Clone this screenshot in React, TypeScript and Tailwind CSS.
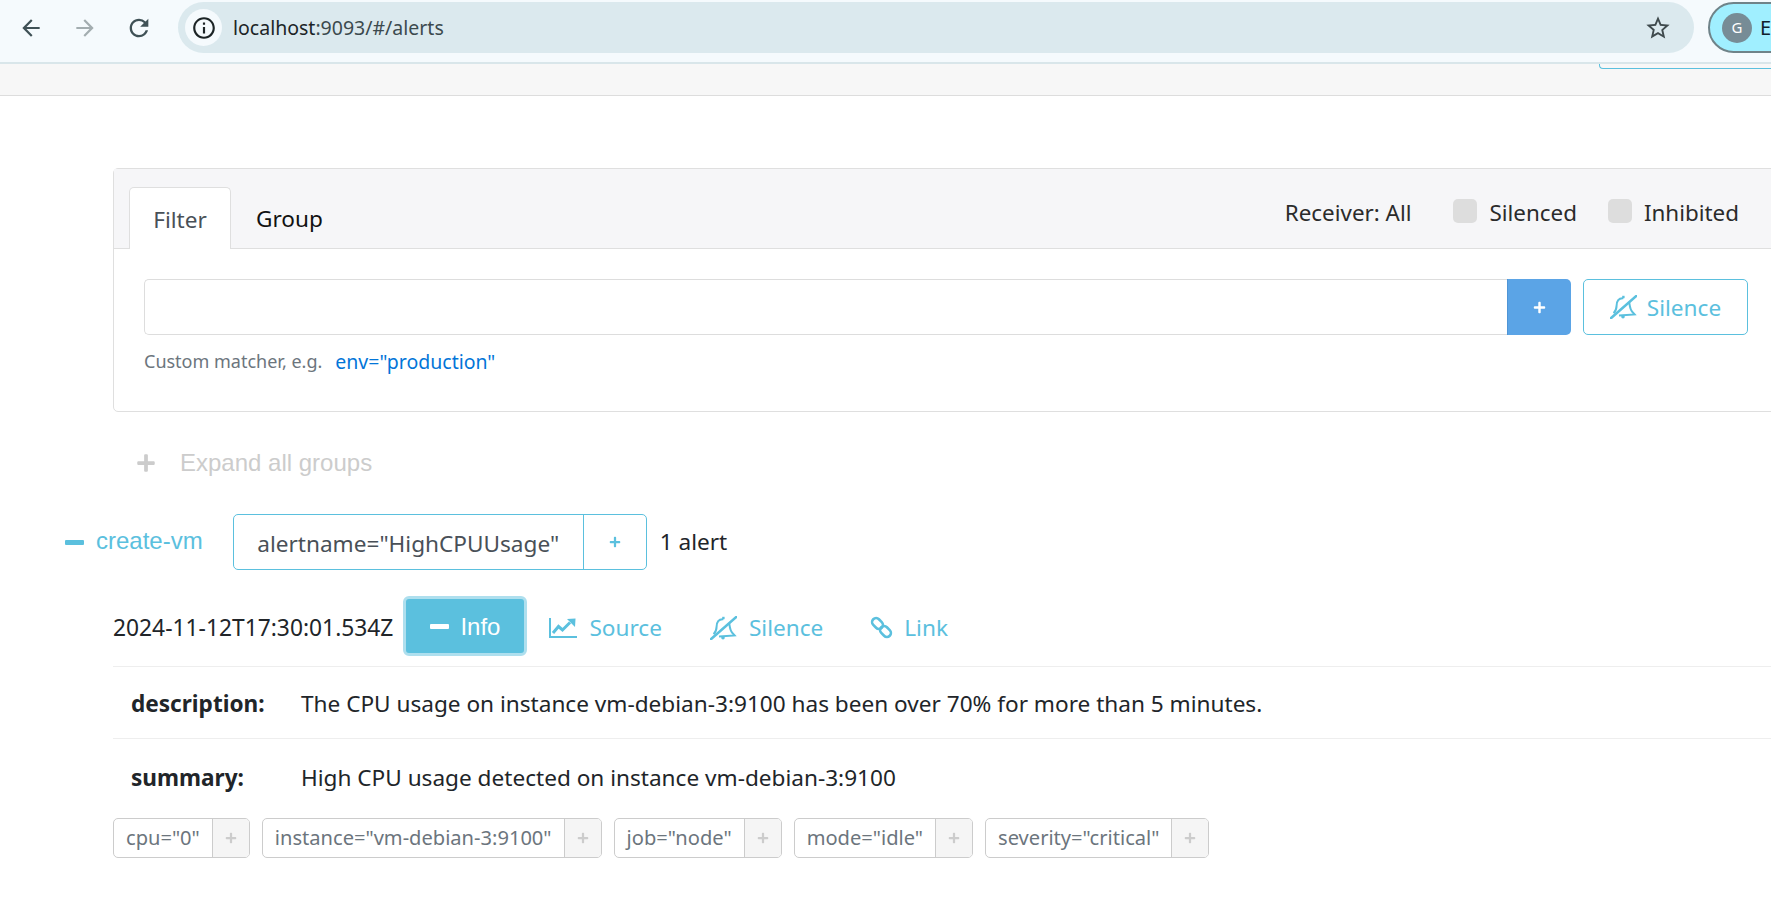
import { FaPlus } from "react-icons/fa";
import { MdArrowBack, MdArrowForward, MdInfoOutline, MdRefresh, MdStarBorder } from "react-icons/md";

const labels = ['cpu="0"', 'instance="vm-debian-3:9100"', 'job="node"', 'mode="idle"', 'severity="critical"'];

// font awesome 4 look, the packaged icons are heavier
const BellSlash = () => (
  <svg viewBox="0 0 27 24" fill="none" stroke="currentColor" strokeWidth="2" className="h-[24px] w-[27px] shrink-0">
    <path d="M0.7 23.4 L26.3 1" strokeWidth="2.6" strokeLinecap="round" />
    <path d="M13.4 3.2 C8.6 2.6 6.6 6.6 6.6 10.5 C6.6 13.6 5.4 16.4 3.6 18.2" />
    <path d="M19.3 7.6 C19.8 11 20 14.6 22.6 17.2 L24.6 19.4 L9 20.6" />
    <path d="M13.4 0.8 L13.4 3.2" strokeWidth="2.4" />
    <circle cx="13" cy="21.8" r="1.8" fill="currentColor" stroke="none" />
  </svg>
);

const LineChart = () => (
  <svg viewBox="0 0 28 20" fill="none" stroke="currentColor" className="h-[20px] w-[28px] shrink-0">
    <path d="M1 0 L1 19 L28 19" strokeWidth="2" />
    <path d="M4 15 L9.5 8.5 L13.5 12 L21 4.5" strokeWidth="3" />
    <path d="M18 1 L26.5 0.5 L26 9 Z" fill="currentColor" stroke="none" />
  </svg>
);

const Chain = () => (
  <svg viewBox="0 0 23 23" fill="none" stroke="currentColor" strokeWidth="2.6" className="h-[23px] w-[23px] shrink-0">
    <rect x="1.5" y="3.5" width="12" height="8" rx="4" transform="rotate(45 7.5 7.5)" />
    <rect x="9.5" y="11.5" width="12" height="8" rx="4" transform="rotate(45 15.5 15.5)" />
  </svg>
);

const BrowserBar = () => (
  <div className="flex h-[64px] items-start overflow-hidden border-b-2 border-[#d9e6ea] bg-[#f5fafd]">
    <div className="flex h-[55px] shrink-0 items-center">
      <MdArrowBack className="ml-[18px] h-[26px] w-[26px] text-[#3f5156]" />
      <MdArrowForward className="ml-[28px] h-[26px] w-[26px] text-[#a3adb0]" />
      <MdRefresh className="ml-[27px] h-[28px] w-[28px] text-[#3f5156]" />
    </div>
    <div className="mt-[2px] ml-[25px] flex h-[51px] w-[1516px] shrink-0 items-center rounded-full bg-[#dbe9ee] pr-[22px] pl-[7px]">
      <div className="flex h-[37px] w-[37px] items-center justify-center rounded-full bg-[#f5fafd]">
        <MdInfoOutline className="h-[26px] w-[26px] text-[#1c2426]" />
      </div>
      <span className="ml-[11px] text-[19.5px] text-[#3c4a4e]">
        <span className="text-[#1c2426]">localhost</span>:9093/#/alerts
      </span>
      <MdStarBorder className="ml-auto h-[28px] w-[28px] text-[#3f4a4d]" />
    </div>
    <div className="mt-[2px] ml-[14px] flex h-[51px] w-[100px] shrink-0 items-center rounded-l-full border-2 border-[#6f8389] bg-[#a0efff] pl-[12px]">
      <div className="flex h-[30px] w-[30px] shrink-0 items-center justify-center rounded-full bg-[#778c96] text-[15px] text-white">
        G
      </div>
      <span className="ml-[8px] text-[20px] text-[#10202a]">E</span>
    </div>
  </div>
);

const Navbar = () => (
  <div className="relative h-[32px] border-b border-[#dddddd] bg-[#f7f7f7]">
    <div className="absolute top-0 left-[1599px] h-[5px] w-[172px] rounded-bl-[4px] border-b border-l border-[#5bc0de]" />
  </div>
);

const FilterCard = () => (
  <div className="w-[1720px] rounded-[5px] border border-[#dfdfdf]">
    <div className="flex h-[80px] items-end justify-between border-b border-[#dfdfdf] bg-[#f6f6f8] pl-[15px]">
      <div className="flex items-end">
        <div className="-mb-px flex h-[62px] w-[102px] items-center justify-center rounded-t-[5px] border border-b-0 border-[#dfdfdf] bg-white pt-[2px] text-[#495057]">
          Filter
        </div>
        <div className="flex h-[62px] items-center pt-[4px] pl-[25px] text-[#111111]">Group</div>
      </div>
      <div className="mr-[93px] flex h-[80px] items-center pt-[10px] text-[22.4px] text-[#2b2b2b]">
        <span>Receiver: All</span>
        <span className="ml-[42px] -mt-[4px] h-[24px] w-[24px] rounded-[5px] bg-[#dddddd]" />
        <span className="ml-[12px]">Silenced</span>
        <span className="ml-[31px] -mt-[4px] h-[24px] w-[24px] rounded-[5px] bg-[#dddddd]" />
        <span className="ml-[12px]">Inhibited</span>
      </div>
    </div>
    <div className="h-[162px] px-[30px] pt-[30px]">
      <div className="flex h-[56px]">
        <div className="w-[1363px] rounded-l-[5px] border border-r-0 border-[#dddddd] bg-white" />
        <div className="flex w-[64px] items-center justify-center rounded-r-[5px] border-l border-[#4f95d6] bg-[#5ba4e6] text-white">
          <FaPlus className="h-[13px] w-[13px]" />
        </div>
        <div className="ml-[12px] flex w-[165px] items-center justify-center rounded-[5px] border border-[#5bc0de] text-[#5bc0de]">
          <BellSlash />
          <span className="ml-[10px] pt-[2px]">Silence</span>
        </div>
      </div>
      <div className="mt-[12px] flex items-center text-[18px] text-[#6c757d]">
        <span>Custom matcher, e.g.</span>
        <span className="ml-[13px] text-[19.5px] text-[#0275d8]">env="production"</span>
      </div>
    </div>
  </div>
);

export default function App() {
  return (
    <div className="h-[924px] w-[1771px] overflow-hidden bg-white font-['Noto_Sans',sans-serif] text-[22.6px] leading-[1.5]">
      <BrowserBar />
      <Navbar />
      <div className="pt-[72px] pl-[113px]">
        <FilterCard />
        <div className="mt-[33px] flex items-center pl-[23px] font-['Liberation_Sans',sans-serif] text-[24px] text-[#cccccc]">
          <FaPlus className="h-[20px] w-[20px]" />
          <span className="ml-[24px]">Expand all groups</span>
        </div>
        <div className="mt-[33px] -ml-[48px] flex items-center">
          <span className="h-[5px] w-[19px] rounded-[1px] bg-[#5bc0de]" />
          <span className="ml-[12px] pb-[2px] font-['Liberation_Sans',sans-serif] text-[24px] text-[#5bc0de]">create-vm</span>
          <div className="ml-[30px] flex h-[56px] rounded-[5px] border border-[#5bc0de]">
            <div className="flex w-[350px] items-center justify-center border-r border-[#5bc0de] pt-[4px] text-[#495057]">
              alertname="HighCPUUsage"
            </div>
            <div className="flex w-[62px] items-center justify-center text-[#5bc0de]">
              <FaPlus className="h-[12px] w-[12px]" />
            </div>
          </div>
          <span className="ml-[13px] text-[#212529]">1 alert</span>
        </div>
        <div className="mt-[26px] flex items-center">
          <span className="pt-[4px] text-[22.8px] text-[#212529]">2024-11-12T17:30:01.534Z</span>
          <div className="ml-[10px] flex h-[60px] w-[124px] items-center justify-center rounded-[6px] border-[3px] border-[#aedfee] bg-[#5bc0de] pt-[1px] font-['Liberation_Sans',sans-serif] text-[24px] text-white">
            <span className="h-[5px] w-[19px] rounded-[1px] bg-white" />
            <span className="ml-[11px]">Info</span>
          </div>
          <div className="ml-[22px] flex items-center pt-[4px] text-[#5bc0de]">
            <LineChart />
            <span className="ml-[12px]">Source</span>
            <span className="ml-[48px]">
              <BellSlash />
            </span>
            <span className="ml-[12px]">Silence</span>
            <span className="ml-[47px]">
              <Chain />
            </span>
            <span className="ml-[11px]">Link</span>
          </div>
        </div>
        <div className="mt-[10px] w-[1720px] border-t border-[#eeeeee]">
          <div className="flex h-[72px] items-center border-b border-[#eeeeee] pt-[3px] pl-[18px]">
            <b className="w-[170px] font-bold text-[#212529]">description:</b>
            <span className="text-[#212529]">The CPU usage on instance vm-debian-3:9100 has been over 70% for more than 5 minutes.</span>
          </div>
          <div className="flex h-[73px] items-center pt-[4px] pl-[18px]">
            <b className="w-[170px] font-bold text-[#212529]">summary:</b>
            <span className="text-[#212529]">High CPU usage detected on instance vm-debian-3:9100</span>
          </div>
        </div>
        <div className="mt-[6px] flex gap-[12px]">
          {labels.map((label) => (
            <div key={label} className="flex h-[40px] overflow-hidden rounded-[5px] border border-[#cccccc] text-[20.1px] text-[#6c757d]">
              <span className="flex items-center whitespace-nowrap border-r border-[#cccccc] px-[12px] pt-[1px]">{label}</span>
              <span className="flex w-[36px] items-center justify-center bg-[#f5f5f5] text-[#cccccc]">
                <FaPlus className="h-[12px] w-[12px]" />
              </span>
            </div>
          ))}
        </div>
      </div>
    </div>
  );
}
